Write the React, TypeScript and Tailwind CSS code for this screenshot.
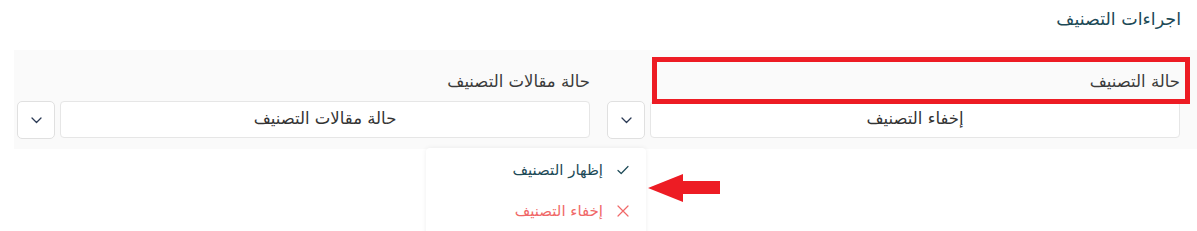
import React from 'react';

const Chevron = () => (
  <svg width="11" height="7" viewBox="0 0 11 7" fill="none">
    <path d="M1 1l4.5 4.5L10 1" stroke="#2b3a55" strokeWidth="1.3" strokeLinecap="round" strokeLinejoin="round" />
  </svg>
);

const SelectField = ({ label, value }: { label: string; value: string }) => (
  <div className="flex flex-col">
    <label className="text-[16.5px] leading-[20px] text-[#3a3a3a] mb-[9px]">{label}</label>
    <div className="flex gap-[5px]">
      <div className="flex-1 h-[37px] bg-white border border-[#e6e6e6] rounded-[4px] flex items-center justify-center text-[16.5px] text-[#333]">
        {value}
      </div>
      <button className="w-[38px] h-[38px] bg-white border border-[#e0e0e0] rounded-[5px] flex items-center justify-center">
        <Chevron />
      </button>
    </div>
  </div>
);

export default function App() {
  return (
    <div
      dir="rtl"
      className="relative w-[1197px] h-[231px] bg-white overflow-hidden font-['DejaVu_Sans',sans-serif]"
    >
      <div className="h-[50px] pt-[7px] pr-[16px] flex justify-start">
        <h2 className="text-[17.5px] leading-[24px] text-[#1d4a57] text-right">اجراءات التصنيف</h2>
      </div>

      <div className="ml-[14px] bg-[#fafafa] pr-[17px] pl-[3px] pt-[22px] pb-[10px] grid grid-cols-2 gap-[17px]">
        <SelectField label="حالة التصنيف" value="إخفاء التصنيف" />
        <SelectField label="حالة مقالات التصنيف" value="حالة مقالات التصنيف" />
      </div>

      {/* annotation box */}
      <div className="absolute left-[652px] top-[57px] w-[538px] h-[47px] border-[5px] border-[#ed1c24]" />

      {/* dropdown menu */}
      <div className="absolute left-[426px] top-[148px] w-[220px] h-[90px] bg-white rounded-[4px] shadow-[0_0_5px_rgba(0,0,0,0.07)] pt-[10px]">
        <div className="flex items-center h-[24px] pr-[17px] gap-[14px] text-[15px] text-[#1d4a57]">
          <svg width="12" height="10" viewBox="0 0 12 10" fill="none">
            <path d="M1 5.5l3.2 3L11 1.5" stroke="#1d4a57" strokeWidth="1.2" strokeLinecap="round" strokeLinejoin="round" />
          </svg>
          <span>إظهار التصنيف</span>
        </div>
        <div className="flex items-center h-[24px] mt-[17px] pr-[17px] gap-[14px] text-[15px] text-[#f06868]">
          <svg width="12" height="12" viewBox="0 0 12 12" fill="none">
            <path d="M1 1l10 10M11 1L1 11" stroke="#f06868" strokeWidth="1.2" strokeLinecap="round" />
          </svg>
          <span>إخفاء التصنيف</span>
        </div>
      </div>

      {/* annotation arrow */}
      <svg className="absolute left-[648px] top-[174px]" width="72" height="28" viewBox="0 0 72 28">
        <polygon points="0,14 35,0 35,7 72,7 72,20 35,20 35,28" fill="#ed1c24" />
      </svg>
    </div>
  );
}
